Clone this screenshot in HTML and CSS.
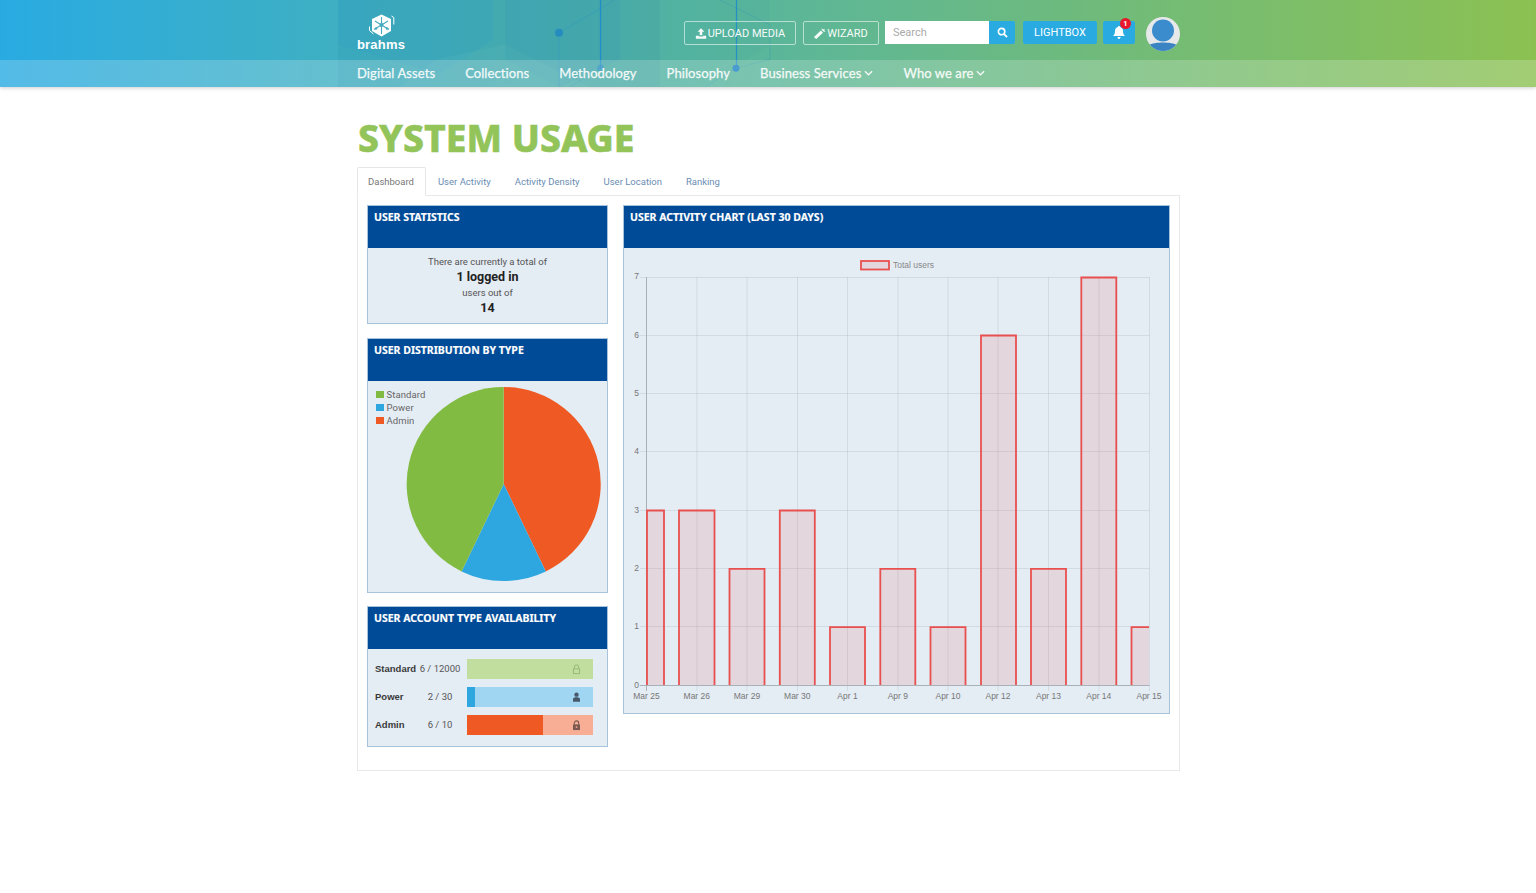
FILE: index.html
```html
<!DOCTYPE html>
<html lang="en">
<head>
<meta charset="utf-8">
<title>System Usage</title>
<link rel="stylesheet" href="styles.css">
</head>
<body>
<header class="site-header">
  <svg class="decor" viewBox="0 0 1536 88" preserveAspectRatio="none" aria-hidden="true">
    <rect x="338" width="322" height="88" fill="#0f6f9a" opacity=".1"/>
    <polygon points="338,0 493,0 493,40 440,75 338,45" fill="#2b9cc7" opacity=".18"/>
    <polygon points="505,0 620,0 620,60 560,88 505,60" fill="#2e8fb8" opacity=".16"/>
    <polygon points="436,60 505,45 590,88 400,88" fill="#7fcfc0" opacity=".1"/>
    <polygon points="660,0 770,0 770,45 700,88 660,88" fill="#3fa8a0" opacity=".12"/>
    <path d="M600.500 0V69M736.500 0V69" stroke="#1583d6" fill="none" opacity=".75" stroke-width="1.200"/>
    <path d="M559 33V88M559 33L615 0M600 69L570 88M736 69L705 88M720 0L770 25V60L736 69" stroke="#1583d6" fill="none" opacity=".35" stroke-width=".6"/>
    <circle cx="559" cy="33" r="4" fill="#1d83c4" opacity=".75"/>
    <circle cx="600.500" cy="69" r="3.500" fill="#1d83c4" opacity=".6"/>
    <circle cx="736" cy="69" r="3.500" fill="#1d83c4"/>
  </svg>
  <div class="top-bar">
    <div class="wrap top-inner">
      <a class="logo" href="#">
        <svg class="logo-mark" viewBox="0 0 27 24" aria-hidden="true">
          <path d="M13.500 .5L23 5V17L13.500 22.500 4 17V5Z" fill="#fff"/>
          <path d="M13.500 3V11L6 15.500M13.500 11L21 15.500M13.500 11V20M7 7L13.500 11 20 7" stroke="#46abc0" stroke-width="1.100" fill="none"/>
          <circle cx="13.500" cy="11" r="2" fill="#46abc0"/>
          <circle cx="8" cy="14.500" r="1.200" fill="#46abc0"/>
          <circle cx="19" cy="14.500" r="1.200" fill="#46abc0"/>
          <path d="M23.500 2L25.800 3.500V10.500M1.500 12.500V16.500L5.500 20" stroke="#fff" stroke-width="1" fill="none"/>
        </svg>
        <span class="logo-text">brahms</span>
      </a>
      <div class="actions">
        <a class="btn-outline btn-upload" href="#">
          <svg class="ico" viewBox="0 0 14 12" aria-hidden="true"><path d="M7 0L11 4H8.500V8H5.500V4H3ZM1 8.500H4.500V9.500H9.500V8.500H13V12H1Z" fill="#fff"/></svg>UPLOAD MEDIA
        </a>
        <a class="btn-outline btn-wizard" href="#">
          <svg class="ico" viewBox="0 0 14 12" aria-hidden="true"><path d="M0 10L8 2.500 10.500 5 2.500 12.500ZM9 0L10.500 1.200 12.500 .5 12 2.500 13.500 4 11.500 4 9 1.800Z" fill="#fff"/></svg>WIZARD
        </a>
        <form class="search">
          <input class="search-input" type="text" placeholder="Search">
          <button class="search-btn" type="button" aria-label="Search">
            <svg viewBox="0 0 12 12" class="search-ico" aria-hidden="true"><circle cx="5" cy="5" r="3.500" fill="none" stroke="#fff" stroke-width="1.800"/><path d="M7.500 7.500L11 11" stroke="#fff" stroke-width="2"/></svg>
          </button>
        </form>
        <a class="btn-blue btn-lightbox" href="#">LIGHTBOX</a>
        <a class="btn-blue btn-bell" href="#" aria-label="Notifications">
          <svg viewBox="0 0 12 13" class="bell-ico" aria-hidden="true"><path d="M6 0C6.600 0 7 .4 7 1 9 1.500 10 3 10 5 10 8 11 9 12 10H0C1 9 2 8 2 5 2 3 3 1.500 5 1 5 .4 5.400 0 6 0ZM4.500 11H7.500C7.500 12 6.800 13 6 13S4.500 12 4.500 11Z" fill="#fff"/></svg>
          <span class="badge">1</span>
        </a>
        <span class="avatar">
          <svg viewBox="0 0 34 34" aria-hidden="true">
            <defs><clipPath id="av"><circle cx="17" cy="17" r="17"/></clipPath></defs>
            <g clip-path="url(#av)">
              <rect width="34" height="34" fill="#e6e8ea"/>
              <path d="M3 28C8 24.500 26 24.500 31 28V34H3Z" fill="#3a84c4"/>
              <circle cx="17" cy="13.500" r="11" fill="#3a8ccd"/>
            </g>
          </svg>
        </span>
      </div>
    </div>
  </div>
  <nav class="nav-bar">
    <div class="wrap nav-inner">
      <a href="#">Digital Assets</a>
      <a href="#">Collections</a>
      <a href="#">Methodology</a>
      <a href="#">Philosophy</a>
      <a href="#">Business Services<svg class="chev" viewBox="0 0 10 6" aria-hidden="true"><path d="M1 1L5 5 9 1" fill="none" stroke="#fff" stroke-width="1.500"/></svg></a>
      <a href="#">Who we are<svg class="chev" viewBox="0 0 10 6" aria-hidden="true"><path d="M1 1L5 5 9 1" fill="none" stroke="#fff" stroke-width="1.500"/></svg></a>
    </div>
  </nav>
</header>

<main class="wrap">
  <h1 class="page-title">SYSTEM USAGE</h1>
  <ul class="tabs">
    <li class="tab active"><a href="#">Dashboard</a></li>
    <li class="tab"><a href="#">User Activity</a></li>
    <li class="tab"><a href="#">Activity Density</a></li>
    <li class="tab"><a href="#">User Location</a></li>
    <li class="tab"><a href="#">Ranking</a></li>
  </ul>
  <div class="tab-pane">
    <div class="col-left">
      <section class="panel">
        <h2 class="panel-head">USER STATISTICS</h2>
        <div class="panel-body stats">
          <div class="stat-note">There are currently a total of</div>
          <div class="stat-big">1 logged in</div>
          <div class="stat-note">users out of</div>
          <div class="stat-big">14</div>
        </div>
      </section>
      <section class="panel">
        <h2 class="panel-head">USER DISTRIBUTION BY TYPE</h2>
        <div class="panel-body pie-body">
          <svg class="pie" viewBox="368 381 239 210" role="img" aria-label="User distribution pie chart">
            <path d="M503.700 484V387A97 97 0 0 1 545.800 571.400Z" fill="#ef5a24"/>
            <path d="M503.700 484L545.800 571.400A97 97 0 0 1 461.600 571.400Z" fill="#2ea7e0"/>
            <path d="M503.700 484L461.600 571.400A97 97 0 0 1 503.700 387Z" fill="#82bb41"/>
            <rect x="376" y="391" width="8" height="7" fill="#82bb41"/>
            <rect x="376" y="404" width="8" height="7" fill="#2ea7e0"/>
            <rect x="376" y="417" width="8" height="7" fill="#ef5a24"/>
            <g class="pie-legend">
              <text x="386.500" y="398">Standard</text>
              <text x="386.500" y="411">Power</text>
              <text x="386.500" y="424">Admin</text>
            </g>
          </svg>
        </div>
      </section>
      <section class="panel">
        <h2 class="panel-head">USER ACCOUNT TYPE AVAILABILITY</h2>
        <div class="panel-body avail">
          <div class="avail-row">
            <span class="avail-name">Standard</span><span class="avail-count">6 / 12000</span>
            <div class="bar bar-green"><span class="fill" style="width:0.050%"></span>
              <svg class="lock" viewBox="0 0 10 12" aria-hidden="true"><path d="M2.500 5V3.500A2.500 2.500 0 0 1 7.500 3.500V5M1.500 5.500H8.500V11H1.500Z" fill="none" stroke="#8fb56f" stroke-width="1"/></svg>
            </div>
          </div>
          <div class="avail-row">
            <span class="avail-name">Power</span><span class="avail-count">2 / 30</span>
            <div class="bar bar-blue"><span class="fill" style="width:6.670%"></span>
              <svg class="lock" viewBox="0 0 10 12" aria-hidden="true"><circle cx="5" cy="3" r="2.500" fill="#46586a"/><path d="M1 11V8C1 6.500 3 6 5 6S9 6.500 9 8V11Z" fill="#46586a"/></svg>
            </div>
          </div>
          <div class="avail-row">
            <span class="avail-name">Admin</span><span class="avail-count">6 / 10</span>
            <div class="bar bar-orange"><span class="fill" style="width:60%"></span>
              <svg class="lock" viewBox="0 0 10 12" aria-hidden="true"><path d="M2.500 5V3.500A2.500 2.500 0 0 1 7.500 3.500V5" fill="none" stroke="#7a5a50" stroke-width="1.200"/><path d="M1 5H9V11.500H1Z" fill="#7a5a50"/><circle cx="5" cy="8" r="1" fill="#f8ae94"/></svg>
            </div>
          </div>
        </div>
      </section>
    </div>
    <section class="panel col-right">
      <h2 class="panel-head">USER ACTIVITY CHART (LAST 30 DAYS)</h2>
      <div class="panel-body chart-body">
        <svg class="chart" viewBox="624 248 545 465" role="img" aria-label="User activity bar chart">
          <g class="grid">
            <path d="M640 277.500H1149.500M640 335.500H1149.500M640 393.500H1149.500M640 451.500H1149.500M640 510.500H1149.500M640 568.500H1149.500M640 626.500H1149.500"/>
            <path d="M697 277V691M747 277V691M797.500 277V691M847.500 277V691M898 277V691M948 277V691M998 277V691M1048.500 277V691M1099 277V691M1149.500 277V691"/>
          </g>
          <path class="axis" d="M646.500 277V691M640 685.500H1149.500"/>
          <g class="bars">
            <path d="M647 685V510.500H664V685"/>
            <path d="M679 685V510.500H714.500V685"/>
            <path d="M729.500 685V568.800H764.500V685"/>
            <path d="M779.800 685V510.500H814.800V685"/>
            <path d="M830 685V627.200H865V685"/>
            <path d="M880.300 685V568.800H915.300V685"/>
            <path d="M930.500 685V627.200H965.500V685"/>
            <path d="M981 685V335.500H1016V685"/>
            <path d="M1031 685V568.800H1066V685"/>
            <path d="M1081.300 685V277.500H1116.300V685"/>
          </g>
          <rect class="bar-fill" x="1131.500" y="627.200" width="17.500" height="57.800"/>
          <path class="bar-line" d="M1131.500 685V627.200H1149"/>
          <g class="y-labels">
            <text x="639" y="279">7</text><text x="639" y="338">6</text><text x="639" y="396">5</text><text x="639" y="454">4</text><text x="639" y="513">3</text><text x="639" y="571">2</text><text x="639" y="629">1</text><text x="639" y="688">0</text>
          </g>
          <g class="x-labels">
            <text x="646.500" y="699">Mar 25</text><text x="696.800" y="699">Mar 26</text><text x="747" y="699">Mar 29</text><text x="797.300" y="699">Mar 30</text><text x="847.500" y="699">Apr 1</text><text x="897.800" y="699">Apr 9</text><text x="948" y="699">Apr 10</text><text x="998" y="699">Apr 12</text><text x="1048.500" y="699">Apr 13</text><text x="1098.800" y="699">Apr 14</text><text x="1149" y="699">Apr 15</text>
          </g>
          <rect class="legend-box" x="861" y="261" width="28" height="8.500"/>
          <text class="legend-text" x="893" y="268">Total users</text>
        </svg>
      </div>
    </section>
  </div>
</main>
</body>
</html>
```
FILE: styles.css
```css
* { box-sizing: border-box; }
body { margin: 0; background: #fff; font-family: "Roboto", "Liberation Sans", sans-serif; color: #333; }
a { text-decoration: none; color: inherit; }
.wrap { width: 823px; margin-left: 357px; }

.site-header { position: relative; height: 87px; background: linear-gradient(90deg, #29abe2 0%, #8cc152 100%); box-shadow: 0 1px 4px rgba(0,0,0,.2); }
.decor { position: absolute; inset: 0; width: 100%; height: 100%; }
.top-bar { position: relative; height: 60px; }
.top-inner { display: flex; justify-content: space-between; height: 60px; }
.logo { display: flex; flex-direction: column; align-items: center; width: 48px; padding-top: 14px; color: #fff; }
.logo-mark { width: 27px; height: 24px; display: block; }
.logo-text { font: 700 13px/13px "Liberation Sans", sans-serif; letter-spacing: .2px; color: #fff; }
.actions { display: flex; align-items: flex-start; padding-top: 17px; }
.btn-outline { display: flex; align-items: center; justify-content: center; height: 24px; margin-top: 4px; border: 1px solid rgba(255,255,255,.6); border-radius: 2px; color: #fff; font: 400 11px/1 "Roboto", sans-serif; opacity: .95; }
.btn-upload { width: 112px; margin-right: 7px; }
.btn-wizard { width: 76px; margin-right: 6px; }
.ico { width: 12px; height: 11px; margin-right: 1px; }
.search { display: flex; margin: 4px 8px 0 0; height: 23px; }
.search-input { width: 104px; height: 23px; border: 0; padding: 0 8px; background: #fff; font: 400 11px "Roboto", sans-serif; outline: 0; }
.search-input::placeholder { color: #aaa; opacity: 1; }
.search-btn { width: 26px; height: 23px; border: 0; padding: 0; background: #29abe2; border-radius: 0 2px 2px 0; display: flex; align-items: center; justify-content: center; }
.search-ico { width: 11px; height: 11px; }
.btn-blue { display: flex; align-items: center; justify-content: center; height: 23px; margin-top: 4px; background: #29abe2; border-radius: 2px; color: #fff; font: 400 11px/1 "Roboto", sans-serif; }
.btn-lightbox { width: 74px; margin-right: 6px; }
.btn-bell { position: relative; width: 32px; margin-right: 11px; }
.bell-ico { width: 12px; height: 13px; }
.badge { position: absolute; top: -3px; right: 4px; width: 11px; height: 11px; border-radius: 50%; background: #e8192c; color: #fff; font: 700 7.500px/11px "Roboto", sans-serif; text-align: center; }
.avatar { width: 34px; height: 34px; display: block; }
.avatar svg { display: block; width: 34px; height: 34px; }

.nav-bar { position: relative; height: 27px; background: rgba(255,255,255,.2); }
.nav-inner { display: flex; gap: 30px; padding-top: 2px; }
.nav-inner a { display: flex; align-items: center; height: 22px; color: #fff; font: 400 13px/22px "Lato", sans-serif; letter-spacing: .08px; -webkit-text-stroke: .25px #fff; opacity: .92; white-space: nowrap; }
.chev { width: 9px; height: 6px; margin-left: 3px; }

.page-title { margin: 26px 0 0 1px; height: 54px; color: #93c45a; font: 800 37.300px/50px "Noto Sans", sans-serif; -webkit-text-stroke: .5px #93c45a; }
.tabs { display: flex; list-style: none; margin: 0; padding: 0; height: 29px; position: relative; z-index: 1; }
.tab a { display: block; height: 29px; padding: 0 11px; color: #6b8db3; font: 400 9.500px/27px "Roboto", sans-serif; border: 1px solid transparent; }
.tab.active a { padding-left: 10px; color: #777; background: #fff; border-color: #e6e6e6; border-bottom-color: #fff; border-radius: 2px 2px 0 0; }
.tab-pane { display: flex; align-items: flex-start; gap: 15px; height: 576px; margin-top: -1px; padding: 9px; border: 1px solid #e8e8e8; }
.col-left { display: flex; flex-direction: column; gap: 13.500px; width: 241px; flex: none; }
.col-right { width: 547px; flex: none; }
.panel { border: 1px solid #a9c2dc; background: #e4ecf4; }
.panel-head { margin: 0; height: 42px; padding: 4px 6px; background: #004b97; color: #fff; font: 700 10.500px/14px "Noto Sans", sans-serif; -webkit-text-stroke: .15px #fff; }
.panel-body { background: #e4ecf4; }

.stats { height: 75px; padding-top: 7px; text-align: center; }
.stat-note { height: 13px; color: #555; font: 400 9.500px/13px "Roboto", sans-serif; }
.stat-big { height: 18px; color: #222; font: 700 12.500px/18px "Roboto", sans-serif; }

.pie-body { height: 211px; }
.pie { display: block; width: 239px; height: 210px; }
.pie-legend text { fill: #666; font: 400 9.500px "Roboto", sans-serif; letter-spacing: .1px; }

.avail { display: flex; flex-direction: column; gap: 8px; height: 97px; padding: 10px 14px 0 7px; }
.avail-row { display: flex; align-items: center; height: 20px; }
.avail-name { width: 40px; flex: none; color: #3a3a3a; font: 700 9.500px/22px "Liberation Sans", sans-serif; white-space: nowrap; }
.avail-count { width: 50px; flex: none; color: #555; font: 400 9.500px/22px "Roboto", sans-serif; text-align: center; white-space: nowrap; }
.bar { position: relative; display: flex; width: 126px; height: 20px; margin-left: 2px; }
.fill { display: block; height: 100%; }
.bar-green { background: #c1de9e; }
.bar-green .fill { background: #82bb41; }
.bar-blue { background: #a0d6f2; }
.bar-blue .fill { background: #2ea7e0; }
.bar-orange { background: #f8ae94; }
.bar-orange .fill { background: #ef5a24; }
.lock { position: absolute; right: 12px; top: 5px; width: 9px; height: 10.500px; }

.chart-body { height: 465px; }
.chart { display: block; width: 545px; height: 465px; }
.grid path { stroke: rgba(0,0,0,.07); stroke-width: 1; fill: none; }
.axis { stroke: #aab0b8; stroke-width: 1; fill: none; }
.bars path { fill: rgba(225,60,60,.12); stroke: #e8504f; stroke-width: 1.800; }
.bar-fill { fill: rgba(225,60,60,.12); }
.bar-line { fill: none; stroke: #e8504f; stroke-width: 1.800; }
.y-labels text { fill: #777; font: 400 8.500px "Liberation Sans", sans-serif; text-anchor: end; }
.x-labels text { fill: #777; font: 400 8.500px "Liberation Sans", sans-serif; text-anchor: middle; }
.legend-box { fill: rgba(225,60,60,.12); stroke: #e8504f; stroke-width: 1.800; }
.legend-text { fill: #888; font: 400 8.500px "Liberation Sans", sans-serif; }
```
